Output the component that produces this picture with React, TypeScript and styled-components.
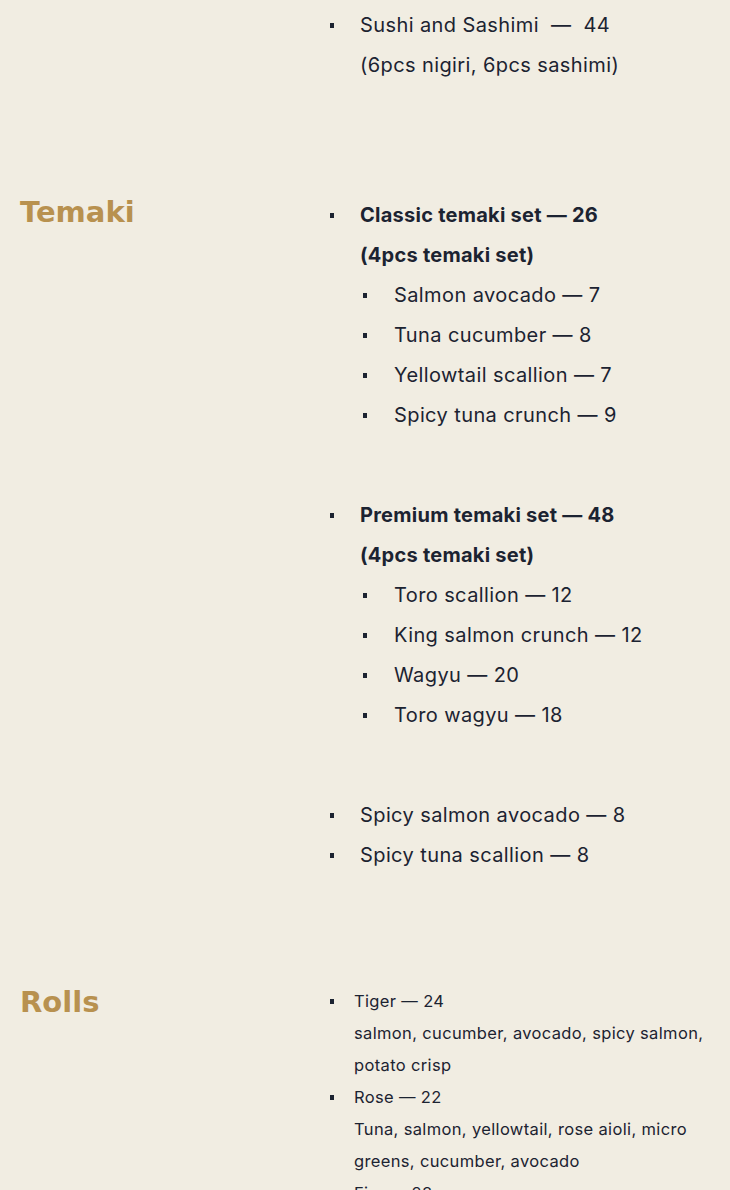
import React from "react";
import styled, { createGlobalStyle } from "styled-components";

const Global = createGlobalStyle`
  html, body { margin: 0; padding: 0; background: #f1ede2; }
  body { font-family: Inter, "Noto Sans", sans-serif; color: #1c2331; }
  * { box-sizing: border-box; }
`;

const Page = styled.main`
  display: flex;
  flex-direction: column;
  gap: 110px;
  padding: 5px 0 40px 20px;
`;

const Section = styled.section`
  display: grid;
  grid-template-columns: 310px 1fr;
`;

const Heading = styled.h2`
  margin: 0;
  font-family: "DejaVu Sans", Verdana, sans-serif;
  font-weight: 700;
  font-size: 29px;
  line-height: 34px;
  color: #b8914f;
  letter-spacing: 0;
`;

const Lists = styled.div`
  display: flex;
  flex-direction: column;
  gap: 60px;
`;

const List = styled.ul`
  list-style: none;
  margin: 0;
  padding: 0;
  font-size: 20px;
  line-height: 40px;
  letter-spacing: 0.4px;
`;

const SmallList = styled.ul`
  list-style: none;
  margin: 0;
  padding: 0;
  font-size: 16.5px;
  line-height: 32px;
  letter-spacing: 0.35px;
  max-width: 380px;
`;

const Item = styled.li`
  position: relative;
  padding-left: 30px;
  &::before {
    content: "";
    position: absolute;
    left: 0;
    top: 18px;
    width: 4px;
    height: 5px;
    background: #1c2331;
  }
`;

const SubList = styled.ul`
  list-style: none;
  margin: 0;
  padding: 0;
  font-weight: 400;
`;

const SubItem = styled.li`
  position: relative;
  padding-left: 34px;
  &::before {
    content: "";
    position: absolute;
    left: 3px;
    top: 18px;
    width: 4px;
    height: 5px;
    background: #1c2331;
  }
`;

const SmallItem = styled.li`
  position: relative;
  padding-left: 24px;
  &::before {
    content: "";
    position: absolute;
    left: 0;
    top: 14px;
    width: 4px;
    height: 5px;
    background: #1c2331;
  }
`;

const Bold = styled.div`
  font-weight: 700;
  letter-spacing: 0.25px;
`;

const Plain = styled.div``;

const TemakiGroup: React.FC<{ title: string; note: string; items: string[] }> = ({ title, note, items }) => (
  <List>
    <Item>
      <Bold>{title}</Bold>
      <Bold>{note}</Bold>
      <SubList>
        {items.map((t) => (
          <SubItem key={t}>{t}</SubItem>
        ))}
      </SubList>
    </Item>
  </List>
);

const rolls = [
  { name: "Tiger — 24", desc: "salmon, cucumber, avocado, spicy salmon, potato crisp" },
  { name: "Rose — 22", desc: "Tuna, salmon, yellowtail, rose aioli, micro greens, cucumber, avocado" },
  { name: "Fire — 28", desc: "spicy tuna, cucumber, avocado, jalapeño" },
];

export default function App() {
  return (
    <>
      <Global />
      <Page>
        <Section>
          <div />
          <List>
            <Item>
              <Plain>Sushi and Sashimi &nbsp;—&nbsp; 44</Plain>
              <Plain>(6pcs nigiri, 6pcs sashimi)</Plain>
            </Item>
          </List>
        </Section>

        <Section>
          <Heading>Temaki</Heading>
          <Lists>
            <TemakiGroup
              title="Classic temaki set — 26"
              note="(4pcs temaki set)"
              items={["Salmon avocado — 7", "Tuna cucumber — 8", "Yellowtail scallion — 7", "Spicy tuna crunch — 9"]}
            />
            <TemakiGroup
              title="Premium temaki set — 48"
              note="(4pcs temaki set)"
              items={["Toro scallion — 12", "King salmon crunch — 12", "Wagyu — 20", "Toro wagyu — 18"]}
            />
            <List>
              <Item>Spicy salmon avocado — 8</Item>
              <Item>Spicy tuna scallion — 8</Item>
            </List>
          </Lists>
        </Section>

        <Section>
          <Heading>Rolls</Heading>
          <SmallList>
            {rolls.map((r) => (
              <SmallItem key={r.name}>
                <Plain>{r.name}</Plain>
                <Plain>{r.desc}</Plain>
              </SmallItem>
            ))}
          </SmallList>
        </Section>
      </Page>
    </>
  );
}
